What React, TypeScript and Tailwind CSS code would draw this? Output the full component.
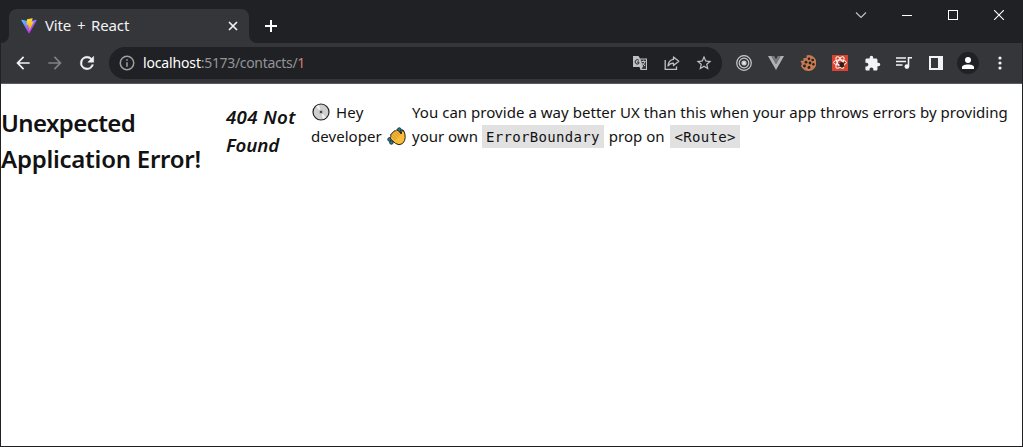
import type { ReactNode } from "react";

const Box = ({ children, w = "w-8" }: { children: ReactNode; w?: string }) => (
  <button className={`${w} flex h-8 shrink-0 items-center justify-center`}>{children}</button>
);

const Svg = ({ children, size = 18 }: { children: ReactNode; size?: number }) => (
  <svg width={size} height={size} viewBox="0 0 24 24" fill="currentColor" className="block shrink-0">
    {children}
  </svg>
);

const ViteLogo = () => (
  <svg width="16" height="16" viewBox="0 0 410 404" className="block shrink-0">
    <defs>
      <linearGradient id="va" x1="6" y1="33" x2="235" y2="344" gradientUnits="userSpaceOnUse">
        <stop stopColor="#41D1FF" />
        <stop offset="1" stopColor="#BD34FE" />
      </linearGradient>
      <linearGradient id="vb" x1="194" y1="9" x2="236" y2="293" gradientUnits="userSpaceOnUse">
        <stop stopColor="#FFEA83" />
        <stop offset=".08" stopColor="#FFDD35" />
        <stop offset="1" stopColor="#FFA800" />
      </linearGradient>
    </defs>
    <path d="M399.641 59.525L215.643 388.545C211.844 395.338 202.084 395.378 198.228 388.618L10.582 59.556C6.381 52.19 12.68 43.267 21.028 44.759L205.223 77.682C206.398 77.892 207.601 77.89 208.776 77.676L389.119 44.806C397.439 43.289 403.768 52.143 399.641 59.525Z" fill="url(#va)" />
    <path d="M292.965 1.574L156.801 28.255C154.563 28.694 152.906 30.59 152.771 32.866L144.395 174.33C144.198 177.662 147.258 180.248 150.51 179.498L188.42 170.749C191.967 169.931 195.172 173.055 194.443 176.622L183.18 231.775C182.422 235.487 185.907 238.661 189.532 237.56L212.947 230.446C216.577 229.344 220.065 232.527 219.297 236.242L201.398 322.875C200.278 328.294 207.486 331.249 210.492 326.603L323.454 95.728C325.314 92.017 322.107 87.786 318.029 88.573L278.302 96.24C274.569 96.96 271.392 93.483 272.446 89.83L298.376 7.276C299.431 3.616 296.704.855 292.965 1.574Z" fill="url(#vb)" />
  </svg>
);

const TabStrip = () => (
  <div className="flex h-[43px] items-start bg-[#202124]">
    <div className="flex h-full items-end pt-[9px]">
      <svg width="8" height="8" className="block text-[#35363a]"><path d="M8 0V8H0A8 8 0 0 0 8 0Z" fill="currentColor" /></svg>
      <div className="flex h-[34px] w-60 items-center rounded-t-lg bg-[#35363a] pr-[11px] pl-3 text-[#f1f3f4]">
        <ViteLogo />
        <span className="ml-2 flex-1 pb-0.5 text-[15px] tracking-[-0.15px] [word-spacing:2px] whitespace-nowrap">Vite + React</span>
        <svg width="10" height="10" viewBox="0 0 10 10" className="block"><path d="M1 1L9 9M9 1L1 9" stroke="currentColor" strokeWidth="1.7" /></svg>
      </div>
      <svg width="8" height="8" className="block text-[#35363a]"><path d="M0 0V8H8A8 8 0 0 1 0 0Z" fill="currentColor" /></svg>
    </div>
    <button className="mt-5 ml-2 text-white">
      <svg width="12" height="12" viewBox="0 0 12 12" className="block"><path d="M6 0V12M0 6H12" stroke="currentColor" strokeWidth="2" /></svg>
    </button>
    <div className="ml-auto flex h-[30px] items-center text-white">
      <Box w="w-[46px]"><svg width="12" height="12" viewBox="0 0 12 12"><path d="M1 3.5L6 8.5L11 3.5" fill="none" stroke="#c4c5c7" strokeWidth="1.1" /></svg></Box>
      <Box w="w-[46px]"><svg width="10" height="10"><path d="M0 5.5H10" stroke="currentColor" /></svg></Box>
      <Box w="w-[46px]"><svg width="10" height="10"><rect x=".5" y=".5" width="9" height="9" fill="none" stroke="currentColor" /></svg></Box>
      <Box w="w-[46px]"><svg width="10" height="10"><path d="M0 0L10 10M10 0L0 10" stroke="currentColor" strokeWidth="1.1" /></svg></Box>
    </div>
  </div>
);

const Toolbar = () => (
  <div className="flex h-[41px] items-start border-b border-[#5b5c5f] bg-[#35363a] px-1.5 pt-1 text-[#f1f3f4]">
    <Box><Svg size={20}><path d="M20 11H7.83l5.59-5.59L12 4l-8 8 8 8 1.41-1.41L7.83 13H20v-2z" /></Svg></Box>
    <Box><span className="text-[#808184]"><Svg size={20}><path d="M12 4l-1.41 1.41L16.17 11H4v2h12.17l-5.58 5.59L12 20l8-8z" /></Svg></span></Box>
    <Box><Svg size={20}><path d="M17.65 6.35A7.96 7.96 0 0 0 12 4a8 8 0 1 0 7.73 10h-2.08A6 6 0 1 1 12 6c1.66 0 3.14.69 4.22 1.78L13 11h7V4l-2.35 2.35z" stroke="currentColor" strokeWidth=".6" /></Svg></Box>
    <div className="ml-1.5 flex h-8 w-[613px] shrink-0 items-center rounded-full bg-[#202124] pr-0.5 pl-[9px]">
      <span className="text-[#9aa0a6]"><Svg size={18}><path d="M11 7h2v2h-2zm0 4h2v6h-2zm1-9a10 10 0 1 0 0 20 10 10 0 0 0 0-20zm0 18a8 8 0 1 1 0-16 8 8 0 0 1 0 16z" /></Svg></span>
      <span className="ml-[7px] flex-1 text-sm whitespace-nowrap text-[#929497]"><span className="tracking-[-0.15px] text-white">localhost</span><span className="tracking-[-0.33px]">:5173/contacts/</span><span className="text-[#d07d78]">1</span></span>
      <span className="flex text-[#bdc1c6]">
        <Box>
          <svg width="16" height="16" viewBox="0 0 16 16"><path d="M1 1H6.5L8 3.5H15V15H8.5L7.5 12H1Z" fill="currentColor" /><path d="M8.5 4.5H14V14H9.5L11 11.5Z" fill="#3a3b3e" /><path d="M6.8 5.2A2.2 2.2 0 1 0 6.8 8.5V7H5" fill="none" stroke="#202124" /><path d="M9.5 6.5H13.5M11.5 5.5V6.5M13 6.5Q12.5 9 10 10.5M10.5 8L13 11" fill="none" stroke="currentColor" /></svg>
        </Box>
        <Box><svg width="16" height="16" viewBox="0 0 16 16" fill="none" stroke="currentColor" strokeWidth="1.3"><path d="M1.2 5V14.3H12.5V11.5" /><path d="M9.5 2L14.8 6.3L9.5 10.5V8.2C7 8.2 5.3 9 4 11C4.3 7.2 6.3 4.8 9.5 4.4Z" strokeLinejoin="round" /></svg></Box>
        <Box><Svg size={18}><path d="M22 9.24l-7.19-.62L12 2 9.19 8.63 2 9.24l5.46 4.73L5.82 21 12 17.27 18.18 21l-1.63-7.03L22 9.24zM12 15.4l-3.76 2.27 1-4.28-3.32-2.88 4.38-.38L12 6.1l1.71 4.04 4.38.38-3.32 2.88 1 4.28L12 15.4z" /></Svg></Box>
      </span>
    </div>
    <div className="ml-1.5 flex">
      <Box><svg width="16" height="16" viewBox="0 0 16 16" fill="none" stroke="#c9cacc" strokeWidth="1.2"><circle cx="8" cy="8" r="7.3" /><circle cx="8" cy="8" r="4.8" /><circle cx="8" cy="8" r="2" fill="#e4e5e7" /></svg></Box>
      <Box><svg width="16" height="14" viewBox="0 0 16 14"><path d="M0 0H3.5L8 8L12.5 0H16L8 14Z" fill="#b1b3b5" /><path d="M3.2 0H6.2L8 3.2L9.8 0H12.8L8 8.4Z" fill="#77797c" /></svg></Box>
      <Box><svg width="16" height="16" viewBox="0 0 16 16"><path d="M8.5 0A8 8 0 1 1 1 11L2 9L.5 6L3.5 5.5L3.5 3L6.5 3L6.5 .5Z" fill="#c67b50" /><g fill="#24211f"><circle cx="9" cy="3.8" r="1.3" /><circle cx="12.7" cy="5" r="1.3" /><circle cx="6" cy="7.2" r="1.4" /><circle cx="10" cy="8" r="1.4" /><circle cx="13.4" cy="9.3" r="1.2" /><circle cx="4.5" cy="11" r="1.4" /><circle cx="9" cy="12.5" r="1.4" /></g></svg></Box>
      <Box><svg width="16" height="16" viewBox="0 0 16 16"><path d="M0 0H16V16H0Z" fill="#d9432f" /><g fill="none" stroke="#fff" strokeWidth="1"><ellipse cx="8" cy="7.5" rx="6.5" ry="2.5" /><ellipse cx="8" cy="7.5" rx="6.5" ry="2.5" transform="rotate(60 8 7.5)" /><ellipse cx="8" cy="7.5" rx="6.5" ry="2.5" transform="rotate(120 8 7.5)" /></g><ellipse cx="9.8" cy="9.8" rx="2.2" ry="2.7" fill="#301c1a" /><path d="M6.5 8L13 12M7 12L13 7" stroke="#301c1a" strokeWidth=".8" /></svg></Box>
      <Box><Svg size={17}><path d="M20.5 11H19V7c0-1.1-.9-2-2-2h-4V3.5a2.5 2.5 0 0 0-5 0V5H4c-1.1 0-1.99.9-1.99 2v3.8H3.5c1.49 0 2.7 1.21 2.7 2.7s-1.21 2.7-2.7 2.7H2V20c0 1.1.9 2 2 2h3.8v-1.5c0-1.49 1.21-2.7 2.7-2.7s2.7 1.21 2.7 2.7V22H17c1.1 0 2-.9 2-2v-4h1.5a2.5 2.5 0 0 0 0-5z" /></Svg></Box>
      <Box><svg width="16" height="14" viewBox="0 0 16 14"><path d="M0 2H10M0 5.5H10M0 9H6.5" stroke="currentColor" strokeWidth="1.4" /><path d="M12.5 10V1.7H16" fill="none" stroke="currentColor" strokeWidth="1.6" /><circle cx="10.9" cy="10.6" r="2.4" fill="currentColor" /></svg></Box>
      <Box><svg width="14" height="14"><path d="M1 1H13V13H1Z" fill="none" stroke="currentColor" strokeWidth="2" /><path d="M9 1H13V13H9Z" fill="currentColor" /></svg></Box>
      <Box><span className="flex size-[22px] items-center justify-center rounded-full bg-[#202124] text-white"><svg width="12" height="12"><circle cx="6" cy="3" r="3" fill="currentColor" /><path d="M0 12V10C0 6.5 12 6.5 12 10V12Z" fill="currentColor" /></svg></span></Box>
      <Box><svg width="4" height="14" fill="currentColor"><circle cx="2" cy="2" r="1.6" /><circle cx="2" cy="7" r="1.6" /><circle cx="2" cy="12" r="1.6" /></svg></Box>
    </div>
  </div>
);

const Disc = () => (
  <svg width="19" height="18" viewBox="0 0 19 18" className="block shrink-0"><circle cx="10" cy="9" r="8" fill="#cfcfcf" stroke="#222" strokeWidth="1.2" /><path d="M10 9L5 3.5L8 2ZM10 9L15 14.5L12 16Z" fill="#f3f3f3" /><circle cx="10" cy="9" r="2.3" fill="#b5b5b5" /><circle cx="10" cy="9" r=".9" fill="#111" /></svg>
);

const Wave = () => (
  <svg width="19" height="19" viewBox="0 0 19 19" className="block shrink-0">
    <g stroke="#17323b" strokeWidth="1" fill="#2f7d92"><circle cx="12.3" cy="2.6" r="1.8" /><circle cx="15" cy="4.6" r="1.8" /><circle cx="2.6" cy="12.4" r="1.8" /><circle cx="4.4" cy="15.4" r="1.8" /></g>
    <path d="M4 9.2L3.6 8Q3.6 7 4.8 6.8Q4.8 5.4 6.4 5.2Q6.8 3.6 8.4 3.8Q9.6 2.2 11 3.4L14.2 7L14.6 4.6Q15.4 3 17 4.4Q18.2 6.5 18.2 10.5Q18.2 14 15.5 16.6Q12 19 8.5 16.4L4 12.4Q2.6 10.6 4 9.2Z" fill="#fbbd38" stroke="#26221c" strokeWidth="1" strokeLinejoin="round" />
    <path d="M4.5 9.2L8.5 13M5.2 7L10 11.6M6.8 5.4L11.5 10M8.8 4.2L13 8.6" fill="none" stroke="#a8691a" strokeWidth=".6" />
  </svg>
);

const Code = ({ children }: { children: ReactNode }) => (
  <code className="inline-flex h-[23px] items-center bg-[#e1e1e1] px-1 pt-0.5 font-['DejaVu_Sans_Mono',monospace] text-[14px] tracking-[0.33px]">{children}</code>
);

export default function App() {
  return (
    <div className="flex h-[447px] w-[1023px] flex-col overflow-hidden border-x border-b border-[#202124] bg-white font-['Noto_Sans','Open_Sans',sans-serif] text-[#121212]">
      <TabStrip />
      <Toolbar />
      <main className="flex whitespace-nowrap">
        <h2 className="w-[225px] pt-[21px] text-2xl leading-9 font-semibold">
          <span className="block tracking-[-0.6px]">Unexpected</span>
          <span className="block tracking-[-0.25px]">Application Error!</span>
        </h2>
        <h3 className="w-[85px] pt-[19px] text-[18.72px] leading-7 font-semibold italic">
          <span className="block tracking-[0.3px]">404 Not</span>
          <span className="block tracking-[-0.1px]">Found</span>
        </h3>
        <p className="w-[101px] pt-4 text-[15px] leading-6">
          <span className="flex h-6 items-center gap-1.5"><Disc /><span className="tracking-[0.2px]">Hey</span></span>
          <span className="flex h-6 items-center gap-[5px]"><span className="tracking-[0.05px]">developer</span><Wave /></span>
        </p>
        <div className="pt-4 text-[15px] leading-6">
          <span className="block h-6 tracking-[0.04px]">You can provide a way better UX than this when your app throws errors by providing</span>
          <span className="flex h-6 items-center"><span>your own</span><span className="ml-1 flex"><Code>ErrorBoundary</Code></span><span className="ml-[5px]">prop on</span><span className="ml-1.5 flex"><Code>{"<Route>"}</Code></span></span>
        </div>
      </main>
    </div>
  );
}
